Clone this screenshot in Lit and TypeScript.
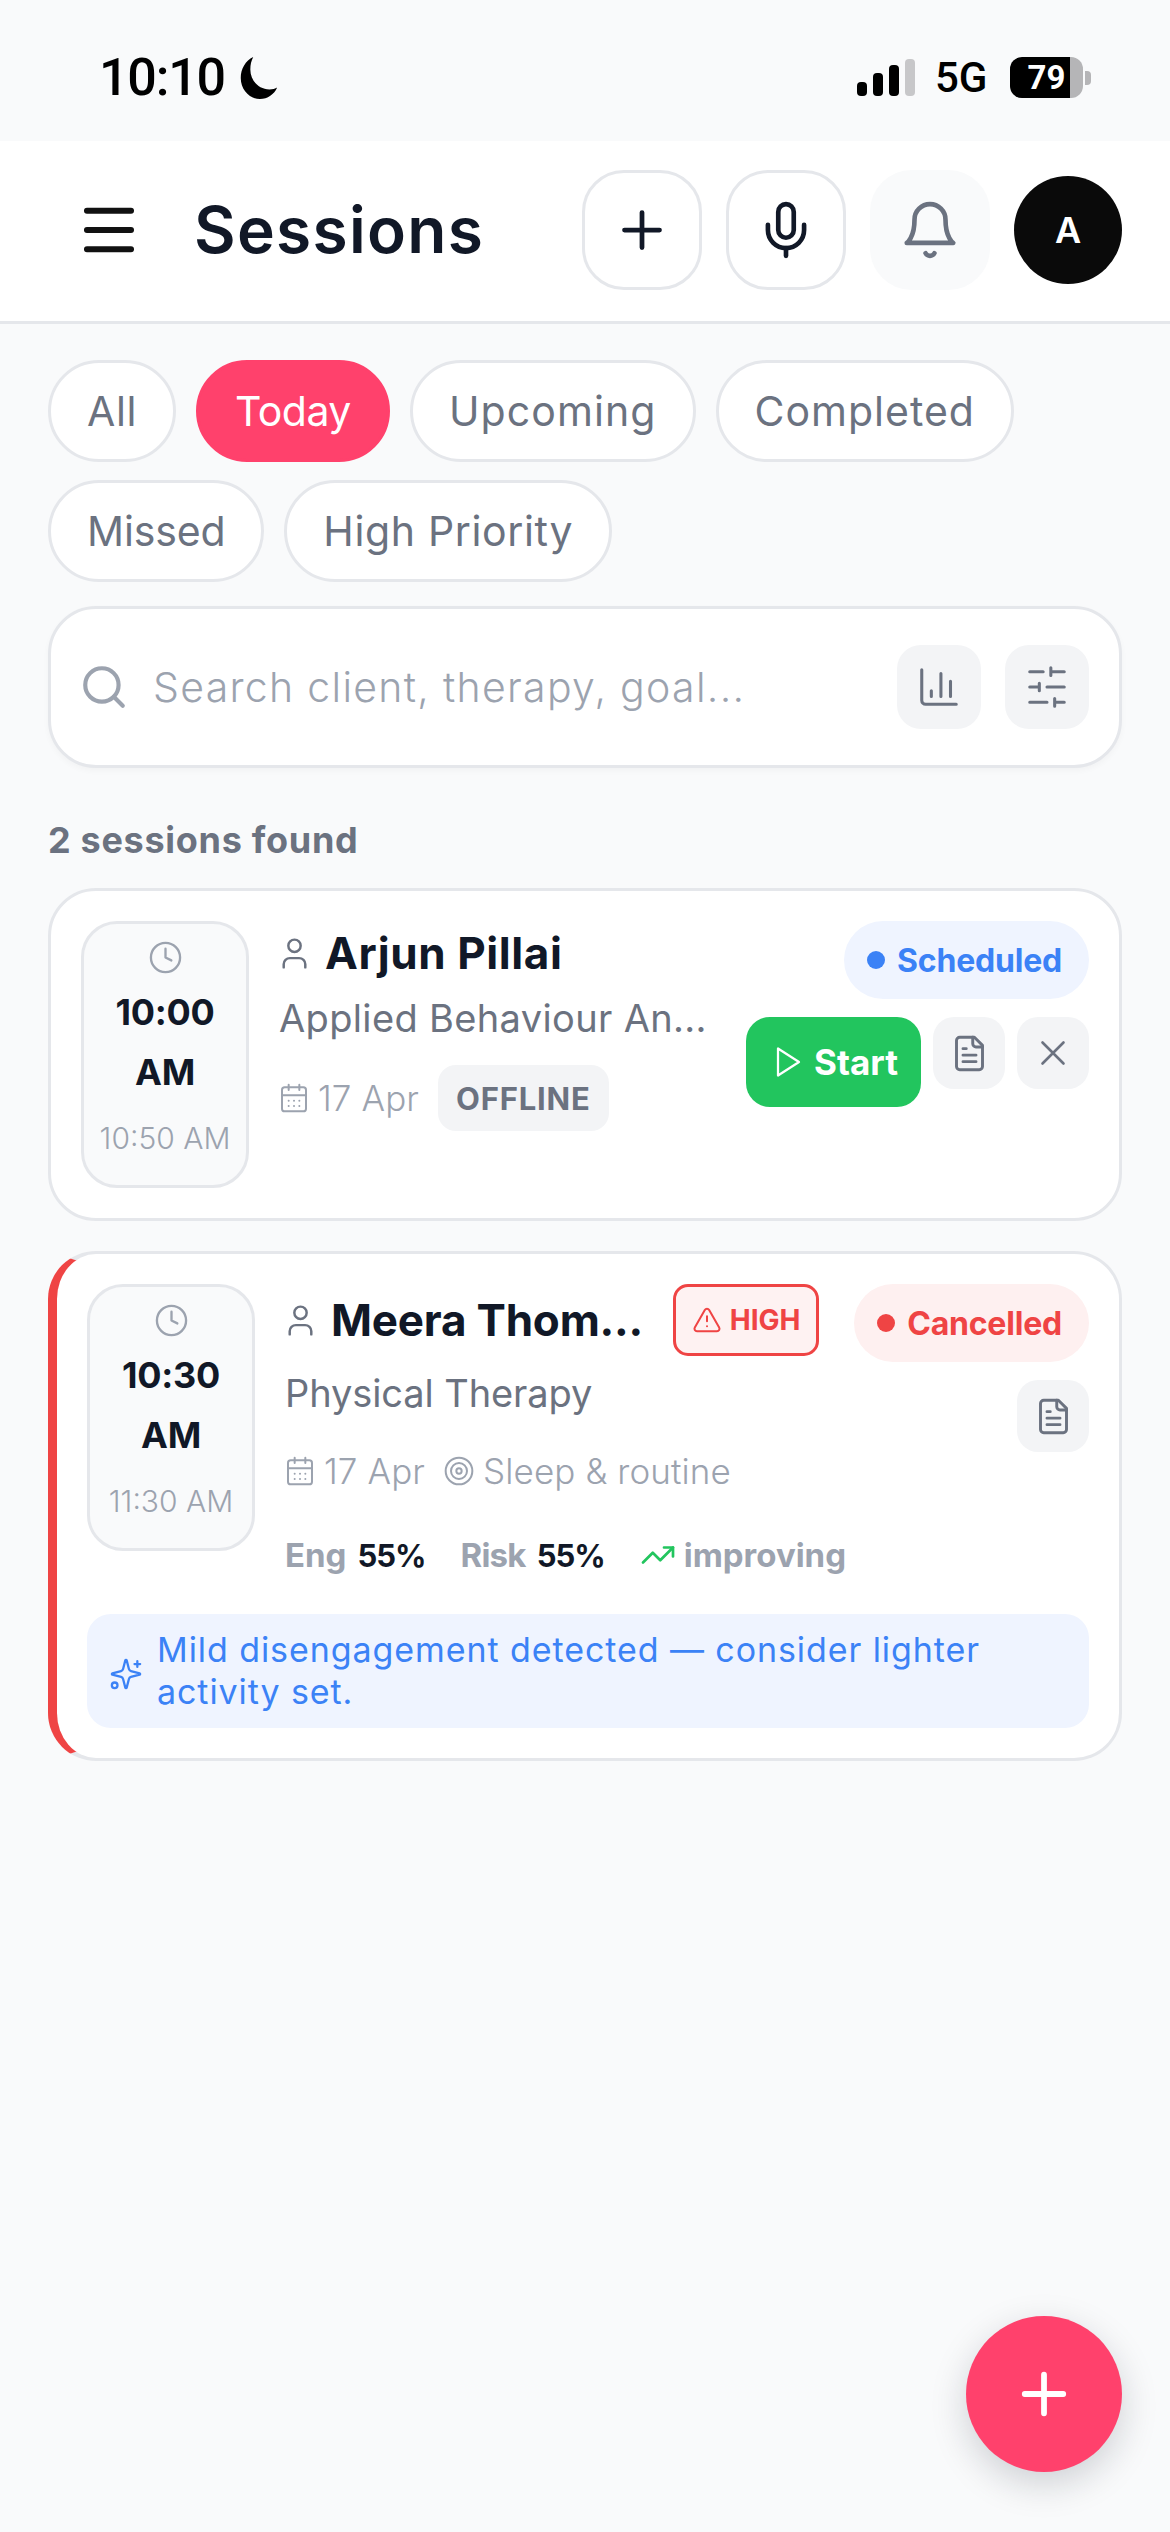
import { LitElement, css, html, svg } from 'lit';
import { customElement } from 'lit/decorators.js';

const icons = {
  menu: svg`<path d="M4 5h16M4 12h16M4 19h16"/>`,
  plus: svg`<path d="M5 12h14M12 5v14"/>`,
  mic: svg`<path d="M12 2a3 3 0 0 0-3 3v7a3 3 0 0 0 6 0V5a3 3 0 0 0-3-3Z"/><path d="M19 10v2a7 7 0 0 1-14 0v-2"/><path d="M12 19v3"/>`,
  bell: svg`<path d="M6 8a6 6 0 0 1 12 0c0 7 3 9 3 9H3s3-2 3-9"/><path d="M10.3 21a1.94 1.94 0 0 0 3.4 0"/>`,
  search: svg`<circle cx="11" cy="11" r="8"/><path d="m21 21-4.3-4.3"/>`,
  chart: svg`<path d="M3 3v16a2 2 0 0 0 2 2h16"/><path d="M18 17V9M13 17V5M8 17v-3"/>`,
  sliders: svg`<path d="M21 4h-7M10 4H3M21 12h-9M8 12H3M21 20h-5M12 20H3M14 2v4M8 10v4M16 18v4"/>`,
  clock: svg`<circle cx="12" cy="12" r="10"/><path d="M12 6v6l4 2"/>`,
  user: svg`<path d="M19 21v-2a4 4 0 0 0-4-4H9a4 4 0 0 0-4 4v2"/><circle cx="12" cy="7" r="4"/>`,
  calendar: svg`<path d="M8 2v4M16 2v4"/><rect x="3" y="4" width="18" height="18" rx="2"/><path d="M3 10h18M8 14h.01M12 14h.01M16 14h.01M8 18h.01M12 18h.01M16 18h.01"/>`,
  target: svg`<circle cx="12" cy="12" r="10"/><circle cx="12" cy="12" r="6"/><circle cx="12" cy="12" r="2"/>`,
  trend: svg`<path d="M22 7 13.5 15.5 8.5 10.5 2 17"/><path d="M16 7h6v6"/>`,
  play: svg`<path d="M6 3v18l14-9Z"/>`,
  file: svg`<path d="M15 2H6a2 2 0 0 0-2 2v16a2 2 0 0 0 2 2h12a2 2 0 0 0 2-2V7Z"/><path d="M14 2v4a2 2 0 0 0 2 2h4M10 9H8M16 13H8M16 17H8"/>`,
  x: svg`<path d="M18 6 6 18M6 6l12 12"/>`,
  alert: svg`<path d="m21.73 18-8-14a2 2 0 0 0-3.48 0l-8 14A2 2 0 0 0 4 21h16a2 2 0 0 0 1.73-3Z"/><path d="M12 9v4M12 17h.01"/>`,
  sparkles: svg`<path d="M9.94 15.5A2 2 0 0 0 8.5 14.06l-6.14-1.58a.5.5 0 0 1 0-.96L8.5 9.94A2 2 0 0 0 9.94 8.5l1.58-6.14a.5.5 0 0 1 .96 0l1.58 6.14a2 2 0 0 0 1.44 1.44l6.14 1.58a.5.5 0 0 1 0 .96L15.5 14.06a2 2 0 0 0-1.44 1.44l-1.58 6.14a.5.5 0 0 1-.96 0Z"/><path d="M20 3v4M22 5h-4"/><circle cx="4" cy="20" r="2"/>`,
};

type IconName = keyof typeof icons;

const icon = (name: IconName, cls: string) =>
  html`<svg class="icon ${cls}" viewBox="0 0 24 24" fill="none" stroke="currentColor" stroke-linecap="round" stroke-linejoin="round">${icons[name]}</svg>`;

const chips = [
  { label: 'All', spacing: 0.6 },
  { label: 'Today', spacing: -0.5 },
  { label: 'Upcoming', spacing: 1.1 },
  { label: 'Completed', spacing: 1.0 },
  { label: 'Missed', spacing: -0.15 },
  { label: 'High Priority', spacing: 0.65 },
];

@customElement('app-root')
export class AppRoot extends LitElement {
  static styles = css`
    :host {
      display: block;
      position: relative;
      height: 2532px;
      overflow: hidden;
      background: #f9fafb;
      font-family: Inter, 'Noto Sans', sans-serif;
      color: #111827;
    }
    .icon { display: block; flex: none; stroke-width: 2; }

    .status {
      height: 141px;
      display: flex;
      align-items: center;
      padding: 14px 79px 0 99px;
      box-sizing: border-box;
      font-family: Roboto, sans-serif;
      color: #000;
    }
    .clock-text { font-size: 52px; font-weight: 500; letter-spacing: -1.2px; }
    .moon { width: 46px; height: 46px; margin-left: 10px; }
    .status-right { margin-left: auto; display: flex; align-items: center; }
    .signal { display: flex; align-items: flex-end; gap: 6px; height: 37px; margin-left: -4px; }
    .signal span { width: 10px; border-radius: 4px; background: #000; }
    .signal .s1 { height: 14px; }
    .signal .s2 { height: 23px; }
    .signal .s3 { height: 31px; }
    .signal .s4 { height: 37px; background: #c7c7c9; }
    .net { font-size: 42px; font-weight: 500; margin-left: 20px; width: 75px; }
    .battery {
      position: relative;
      width: 73px;
      height: 41px;
      border-radius: 12px;
      overflow: hidden;
      background: linear-gradient(90deg, #000 82%, #b5b5b7 82%);
      color: #fff;
      font-size: 33px;
      font-weight: 700;
      line-height: 41px;
      text-align: center;
    }
    .nub { width: 6px; height: 14px; margin-left: 2px; border-radius: 0 4px 4px 0; background: #b5b5b7; }

    .header {
      height: 183px;
      box-sizing: border-box;
      background: #fff;
      border-bottom: 3px solid #e5e7eb;
      display: flex;
      align-items: center;
      padding: 0 48px 3px 84px;
    }
    .i-menu { width: 66px; height: 66px; margin-left: -8px; color: #111; stroke-width: 2.2; }
    .title {
      margin-left: 52px;
      font-size: 64px;
      font-weight: 600;
      letter-spacing: 1.3px;
      color: #111827;
    }
    .header-actions { margin-left: auto; display: flex; align-items: center; gap: 24px; }
    .round-btn {
      width: 120px;
      height: 120px;
      box-sizing: border-box;
      border-radius: 42px;
      border: 3px solid #e5e7eb;
      background: #fff;
      display: flex;
      align-items: center;
      justify-content: center;
      color: #111827;
    }
    .round-btn.soft { border-color: #f9fafb; background: #f9fafb; color: #6b7280; }
    .i-hdr { width: 60px; height: 60px; stroke-width: 1.9; }
    .i-hdr-sm { width: 62px; height: 62px; stroke-width: 1.8; }
    .avatar {
      width: 108px;
      height: 108px;
      border-radius: 50%;
      background: #0a0a0a;
      color: #fff;
      font-size: 36px;
      font-weight: 600;
      display: flex;
      align-items: center;
      justify-content: center;
    }

    .content { padding: 36px 48px 0; }
    .chips { display: flex; flex-wrap: wrap; gap: 18px 20px; }
    .chip {
      height: 102px;
      box-sizing: border-box;
      padding: 0 36px;
      border-radius: 51px;
      border: 3px solid #e5e7eb;
      background: #fff;
      color: #6b7280;
      font-size: 41px;
      display: flex;
      align-items: center;
    }
    .chip.active { background: #ff416c; border-color: #ff416c; color: #fff; }

    .search {
      margin-top: 24px;
      height: 162px;
      box-sizing: border-box;
      border: 3px solid #e5e7eb;
      border-radius: 48px;
      background: #fff;
      box-shadow: 0 3px 6px rgba(17, 24, 39, 0.03);
      display: flex;
      align-items: center;
      padding: 0 30px 0 28px;
    }
    .i-search { width: 50px; height: 50px; color: #9ca3af; stroke-width: 2; }
    .search-text { margin-left: 24px; font-size: 41px; color: #9ca3af; font-weight: 300; letter-spacing: 1.3px; flex: 1; }
    .tool {
      width: 84px;
      height: 84px;
      border-radius: 24px;
      background: #f3f4f6;
      color: #6b7280;
      display: flex;
      align-items: center;
      justify-content: center;
      margin-left: 24px;
    }
    .i-tool { width: 46px; height: 46px; stroke-width: 1.6; }

    .found { margin-top: 48px; font-size: 36px; font-weight: 700; line-height: 48px; color: #6b7280; letter-spacing: 0.7px; }

    .card {
      margin-top: 24px;
      border: 3px solid #e5e7eb;
      border-radius: 48px;
      background: #fff;
      padding: 30px;
    }
    .card.priority { position: relative; margin-top: 30px; padding-left: 30px; border-left: 9px solid #ef4444; }
    .card-row { display: flex; }
    .timebox {
      width: 168px;
      height: 267px;
      box-sizing: border-box;
      flex: none;
      border: 3px solid #e5e7eb;
      border-radius: 36px;
      background: #f9fafb;
      padding-top: 16px;
      display: flex;
      flex-direction: column;
      align-items: center;
      text-align: center;
    }
    .i-clock { width: 35px; height: 35px; color: #9ca3af; stroke-width: 1.6; }
    .time { margin-top: 7px; font-size: 36px; line-height: 60px; font-weight: 700; letter-spacing: -0.3px; color: #111827; }
    .end { margin-top: 12px; font-size: 30px; line-height: 48px; font-weight: 300; color: #9ca3af; white-space: nowrap; }

    .main { flex: 1; min-width: 0; margin-left: 30px; }
    .name-row { display: flex; align-items: center; }
    .i-user { width: 37px; height: 37px; color: #6b7280; margin: 0 12px 0 -3px; stroke-width: 1.6; }
    .name { font-size: 44px; font-weight: 700; color: #111827; white-space: nowrap; letter-spacing: 0.6px; }
    .sub { font-size: 38px; line-height: 48px; color: #6b7280; white-space: nowrap; font-weight: 400; letter-spacing: 0.35px; }
    .meta { display: flex; align-items: center; color: #9ca3af; font-size: 35px; font-weight: 300; letter-spacing: 0.1px; }
    .i-meta { width: 32px; height: 32px; stroke-width: 1.5; margin: 0 8px 0 -1px; }
    .tag {
      height: 66px;
      box-sizing: border-box;
      padding: 0 18px;
      border-radius: 18px;
      background: #f3f4f6;
      color: #6b7280;
      font-size: 31px;
      font-weight: 700;
      letter-spacing: 0.8px;
      display: flex;
      align-items: center;
      margin-left: 19px;
    }

    .side { display: flex; flex-direction: column; align-items: flex-end; flex: none; }
    .pill {
      height: 78px;
      box-sizing: border-box;
      padding: 0 27px 0 23px;
      border-radius: 39px;
      display: flex;
      align-items: center;
      gap: 12px;
      font-size: 32px;
      font-weight: 700;
      letter-spacing: -0.2px;
    }
    .pill i { width: 18px; height: 18px; border-radius: 50%; background: currentColor; }
    .pill.blue { background: #eff4ff; color: #3b82f6; }
    .pill.red { background: #fef0f0; color: #ef4444; }
    .actions { margin-top: 18px; display: flex; align-items: flex-start; gap: 12px; }
    .start {
      width: 175px;
      height: 90px;
      border-radius: 24px;
      background: #22c55e;
      color: #fff;
      font-size: 35px;
      font-weight: 700;
      display: flex;
      align-items: center;
      justify-content: center;
      gap: 9px;
    }
    .i-play { width: 36px; height: 36px; stroke-width: 1.5; }
    .act {
      width: 72px;
      height: 72px;
      border-radius: 21px;
      background: #f3f4f6;
      color: #6b7280;
      display: flex;
      align-items: center;
      justify-content: center;
    }
    .i-act { width: 39px; height: 39px; stroke-width: 1.8; }
    .i-x { width: 42px; height: 42px; stroke-width: 1.5; }

    .first .name-row { height: 64px; }
    .first .sub { margin-top: 9px; }
    .first .meta { margin-top: 23px; }

    .second .name-row { height: 72px; }
    .second .name { letter-spacing: -0.2px; }
    .second .sub { margin-top: 13px; letter-spacing: -0.1px; }
    .second .meta { margin-top: 33px; height: 42px; }
    .target { margin-left: 19px; }
    .high {
      margin-left: auto;
      margin-right: 35px;
      height: 72px;
      width: 146px;
      box-sizing: border-box;
      flex: none;
      border: 3px solid #ef4444;
      border-radius: 15px;
      background: #fef2f2;
      color: #ef4444;
      font-size: 28px;
      font-weight: 700;
      display: flex;
      align-items: center;
      justify-content: center;
      gap: 8px;
    }
    .i-alert { width: 30px; height: 30px; stroke-width: 1.6; }
    .metrics {
      margin-top: 42px;
      height: 42px;
      display: flex;
      align-items: center;
      font-size: 33px;
      font-weight: 700;
      color: #9ca3af;
      white-space: nowrap;
    }
    .metrics b { margin-left: 11px; color: #111827; font-size: 31px; font-weight: 700; letter-spacing: -1px; }
    .metrics .risk { margin-left: 35px; letter-spacing: -0.8px; }
    .i-trend { width: 36px; height: 36px; color: #22c55e; stroke-width: 1.8; margin: 0 8px 0 35px; }
    .insight {
      margin-top: 38px;
      height: 114px;
      box-sizing: border-box;
      border-radius: 24px;
      background: #eff4ff;
      color: #3b82f6;
      display: flex;
      align-items: center;
      padding: 0 24px;
      font-size: 34px;
      line-height: 42px;
      letter-spacing: 0.92px;
    }
    .i-spark { width: 34px; height: 34px; stroke-width: 1.6; margin: 6px 14px 0 -2px; }

    .fab {
      position: absolute;
      left: 966px;
      top: 2316px;
      width: 156px;
      height: 156px;
      border-radius: 50%;
      background: #ff416c;
      color: #fff;
      display: flex;
      align-items: center;
      justify-content: center;
      box-shadow: 0 12px 36px rgba(17, 24, 39, 0.18);
    }
    .i-fab { width: 66px; height: 66px; stroke-width: 2.1; }
  `;

  private renderStatus() {
    return html`
      <div class="status">
        <span class="clock-text">10:10</span>
        <svg class="moon" viewBox="0 0 24 24" fill="#000"><path d="M9.5 1C5.500 3 3 7 3 12c0 6 4.500 11 10 11 4 0 7.500-2.500 9-6-1 .6-2.500 1-4 1-6 0-10-5-10-10.500C8 5 8.500 3 9.500 1Z"/></svg>
        <div class="status-right">
          <div class="signal"><span class="s1"></span><span class="s2"></span><span class="s3"></span><span class="s4"></span></div>
          <span class="net">5G</span>
          <div class="battery">79</div>
          <div class="nub"></div>
        </div>
      </div>
    `;
  }

  private renderHeader() {
    return html`
      <div class="header">
        ${icon('menu', 'i-menu')}
        <div class="title">Sessions</div>
        <div class="header-actions">
          <div class="round-btn">${icon('plus', 'i-hdr')}</div>
          <div class="round-btn">${icon('mic', 'i-hdr-sm')}</div>
          <div class="round-btn soft">${icon('bell', 'i-hdr-sm')}</div>
          <div class="avatar">A</div>
        </div>
      </div>
    `;
  }

  private renderTime(start: string, end: string) {
    return html`
      <div class="timebox">
        ${icon('clock', 'i-clock')}
        <div class="time">${start}<br />AM</div>
        <div class="end">${end}</div>
      </div>
    `;
  }

  render() {
    return html`
      ${this.renderStatus()}
      ${this.renderHeader()}
      <div class="content">
        <div class="chips">
          ${chips.map(
            (c) => html`<div class="chip ${c.label === 'Today' ? 'active' : ''}" style="letter-spacing: ${c.spacing}px">${c.label}</div>`,
          )}
        </div>
        <div class="search">
          ${icon('search', 'i-search')}
          <div class="search-text">Search client, therapy, goal...</div>
          <div class="tool">${icon('chart', 'i-tool')}</div>
          <div class="tool">${icon('sliders', 'i-tool')}</div>
        </div>
        <div class="found">2 sessions found</div>

        <div class="card first">
          <div class="card-row">
            ${this.renderTime('10:00', '10:50 AM')}
            <div class="main">
              <div class="name-row">${icon('user', 'i-user')}<span class="name">Arjun Pillai</span></div>
              <div class="sub">Applied Behaviour An...</div>
              <div class="meta">${icon('calendar', 'i-meta')}17 Apr<span class="tag">OFFLINE</span></div>
            </div>
            <div class="side">
              <div class="pill blue"><i></i>Scheduled</div>
              <div class="actions">
                <div class="start">${icon('play', 'i-play')}Start</div>
                <div class="act">${icon('file', 'i-act')}</div>
                <div class="act">${icon('x', 'i-x')}</div>
              </div>
            </div>
          </div>
        </div>

        <div class="card priority second">
          <div class="card-row">
            ${this.renderTime('10:30', '11:30 AM')}
            <div class="main">
              <div class="name-row">
                ${icon('user', 'i-user')}<span class="name">Meera Thom...</span>
                <div class="high">${icon('alert', 'i-alert')}HIGH</div>
              </div>
              <div class="sub">Physical Therapy</div>
              <div class="meta">
                ${icon('calendar', 'i-meta')}17 Apr
                <span class="target"></span>${icon('target', 'i-meta')}Sleep &amp; routine
              </div>
              <div class="metrics">
                Eng<b>55%</b><span class="risk">Risk</span><b>55%</b>${icon('trend', 'i-trend')}improving
              </div>
            </div>
            <div class="side">
              <div class="pill red"><i></i>Cancelled</div>
              <div class="actions"><div class="act">${icon('file', 'i-act')}</div></div>
            </div>
          </div>
          <div class="insight">
            ${icon('sparkles', 'i-spark')}
            <span>Mild disengagement detected — consider lighter activity set.</span>
          </div>
        </div>
      </div>
      <div class="fab">${icon('plus', 'i-fab')}</div>
    `;
  }
}
